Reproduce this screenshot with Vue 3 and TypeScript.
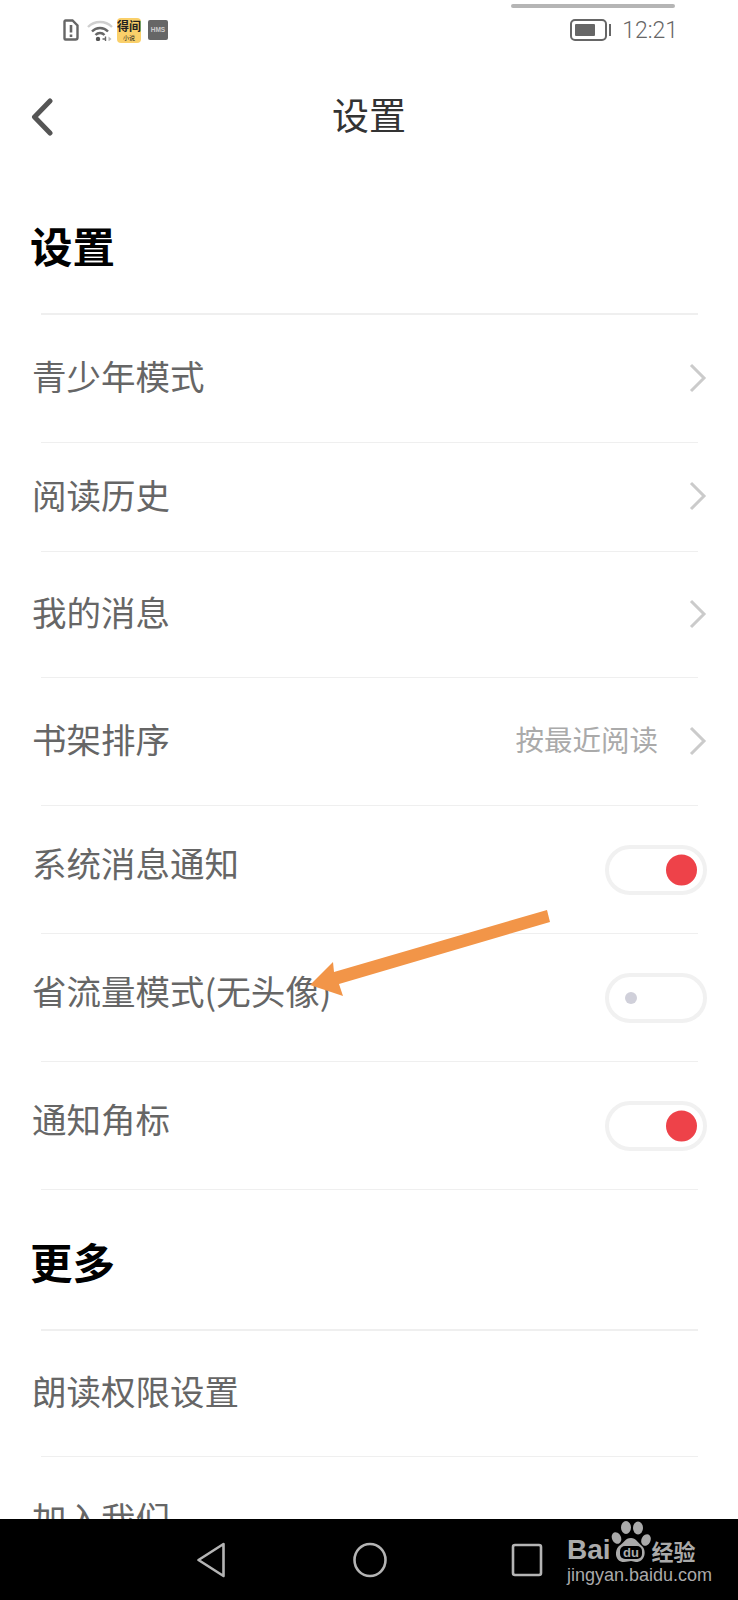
<script setup lang="ts">
interface Row {
  label: string
  kind: 'link' | 'on' | 'off' | 'plain'
  value?: string
  size?: 'short' | 'tight'
}

const firstRows: Row[] = [
  { label: '青少年模式', kind: 'link' },
  { label: '阅读历史', kind: 'link', size: 'short' },
  { label: '我的消息', kind: 'link', size: 'tight' },
  { label: '书架排序', kind: 'link', value: '按最近阅读' },
  { label: '系统消息通知', kind: 'on' },
  { label: '省流量模式(无头像)', kind: 'off' },
  { label: '通知角标', kind: 'on' }
]

const moreRows: Row[] = [
  { label: '朗读权限设置', kind: 'plain', size: 'tight' },
  { label: '加入我们', kind: 'plain' }
]

const sections = [
  { title: '设置', rows: firstRows },
  { title: '更多', rows: moreRows }
]
</script>

<template>
  <div class="page">
    <div class="top-pill"></div>

    <header class="status">
      <svg class="sim" width="16" height="22" viewBox="0 0 16 22">
        <path d="M2.5 1.5h7l5 5v12a2 2 0 0 1-2 2h-10a1 1 0 0 1-1-1v-17a1 1 0 0 1 1-1z" fill="none" stroke="#666" stroke-width="2.4" />
        <path d="M8 6v7.5M8 15.5v2.5" stroke="#666" stroke-width="2.6" fill="none" />
      </svg>
      <svg class="wifi" width="26" height="22" viewBox="0 0 26 22">
        <path d="M1 8a17 17 0 0 1 24 0" fill="none" stroke="#cfcfcf" stroke-width="2.4" />
        <path d="M5 12.5a11 11 0 0 1 16 0" fill="none" stroke="#666" stroke-width="2.4" />
        <path d="M8.5 16a6 6 0 0 1 9 0" fill="none" stroke="#666" stroke-width="2.4" />
        <circle cx="11" cy="20" r="2.2" fill="#555" />
        <path d="M15.5 20h3M18.5 17.5v5" stroke="#666" stroke-width="1.4" fill="none" />
        <path d="M21.5 17.5l3 2.5-3 2.5z" fill="#bbb" />
      </svg>
      <div class="app-icon">
        <span class="app-name">得间</span>
        <span class="app-sub">小说</span>
      </div>
      <div class="hms">HMS</div>
      <div class="status-right">
        <div class="battery"><div class="battery-fill"></div></div>
        <div class="battery-tip"></div>
        <span class="time">12:21</span>
      </div>
    </header>

    <nav class="navbar">
      <svg class="back" width="22" height="38" viewBox="0 0 22 38">
        <path d="M19 3L3.5 19 19 35" fill="none" stroke="#555" stroke-width="5" stroke-linecap="round" stroke-linejoin="round" />
      </svg>
      <span class="nav-title">设置</span>
    </nav>

    <main class="content">
      <section v-for="section in sections" :key="section.title">
        <h2 class="section-title">{{ section.title }}</h2>
        <div class="divider strong"></div>
        <template v-for="row in section.rows" :key="row.label">
          <div class="row" :class="[row.size, { lifted: row.kind === 'on' || row.kind === 'off' }]">
            <span class="label">{{ row.label }}</span>
            <span v-if="row.value" class="value">{{ row.value }}</span>
            <svg v-if="row.kind === 'link'" class="chevron" width="18" height="30" viewBox="0 0 18 30">
              <path d="M2 2l13 13L2 28" fill="none" stroke="#cbcbcb" stroke-width="3" />
            </svg>
            <div v-if="row.kind === 'on' || row.kind === 'off'" class="toggle" :class="row.kind">
              <div class="knob"></div>
            </div>
          </div>
          <div class="divider"></div>
        </template>
      </section>
    </main>

    <footer class="sysbar">
      <svg width="30" height="36" viewBox="0 0 30 36">
        <path d="M27.5 2L2.5 18l25 16z" fill="none" stroke="#b4b4b4" stroke-width="2.6" stroke-linejoin="round" />
      </svg>
      <svg width="34" height="36" viewBox="0 0 34 36">
        <ellipse cx="17" cy="18" rx="15.5" ry="16" fill="none" stroke="#b4b4b4" stroke-width="2.6" />
      </svg>
      <svg class="recents" width="32" height="34" viewBox="0 0 32 34">
        <rect x="2" y="2" width="28" height="30" rx="2" fill="none" stroke="#b4b4b4" stroke-width="2.6" />
      </svg>
    </footer>

    <div class="watermark">
      <div class="wm-top">
        <span class="wm-bai">Bai</span>
        <svg class="paw" width="40" height="42" viewBox="0 0 40 42">
          <ellipse cx="15" cy="6.5" rx="5" ry="6.5" fill="#aaa" />
          <ellipse cx="27" cy="7" rx="5" ry="6.5" fill="#aaa" />
          <ellipse cx="5.5" cy="17" rx="4.5" ry="6" fill="#aaa" transform="rotate(-25 5.5 17)" />
          <ellipse cx="35" cy="19" rx="4.5" ry="6" fill="#aaa" transform="rotate(25 35 19)" />
          <path d="M20 17c5 0 6 4 11 8 5 5 3 16-6 16-2 0-3-1-5-1s-4 1-7 1c-9 0-10-11-5-16 5-3 6-8 12-8z" fill="#aaa" />
          <rect x="9" y="25" width="22" height="13" rx="5" fill="#000" />
          <text x="20" y="36" text-anchor="middle" class="wm-du">du</text>
        </svg>
        <span class="wm-cn">经验</span>
      </div>
      <div class="wm-url">jingyan.baidu.com</div>
    </div>

    <svg class="annotation" width="260" height="100" viewBox="300 905 260 100">
      <path d="M547 910L550 922L339 984L343 996L310 985L333 962L334 972z" fill="#f29548" />
    </svg>
  </div>
</template>

<style scoped>
.page {
  position: relative;
  width: 738px;
  height: 1600px;
  overflow: hidden;
  background: #fff;
  display: flex;
  flex-direction: column;
  font-family: 'Noto Sans CJK SC', 'Noto Sans', sans-serif;
}
.top-pill {
  position: absolute;
  left: 511px;
  top: 4px;
  width: 164px;
  height: 4px;
  border-radius: 2px;
  background: #b5b5b5;
}
.status {
  height: 60px;
  flex: none;
  display: flex;
  align-items: center;
  padding: 0 60px 0 63px;
  box-sizing: border-box;
}
.wifi {
  margin-left: 8px;
}
.app-icon {
  width: 24px;
  height: 25px;
  margin-left: 4px;
  border-radius: 4px;
  background: #fad06a;
  display: flex;
  flex-direction: column;
  align-items: center;
  color: #222;
  overflow: hidden;
}
.app-name {
  font-size: 12px;
  line-height: 16px;
  font-weight: 700;
  white-space: nowrap;
}
.app-sub {
  font-size: 6px;
  line-height: 8px;
}
.hms {
  width: 20px;
  height: 20px;
  margin-left: 7px;
  border-radius: 2px;
  background: #666;
  color: #ccc;
  font: 700 6.5px/20px 'Liberation Sans', sans-serif;
  text-align: center;
}
.status-right {
  margin-left: auto;
  display: flex;
  align-items: center;
}
.battery {
  width: 37px;
  height: 22px;
  box-sizing: border-box;
  border: 2.5px solid #666;
  border-radius: 5px;
  padding: 3px;
}
.battery-fill {
  width: 20px;
  height: 100%;
  border-radius: 1px;
  background: #666;
}
.battery-tip {
  width: 2px;
  height: 12px;
  margin-left: 2px;
  background: #666;
}
.time {
  margin-left: 11px;
  font: 300 23px/1 Roboto, sans-serif;
  color: #666;
}
.navbar {
  position: relative;
  height: 114px;
  flex: none;
  display: flex;
  align-items: center;
  justify-content: center;
}
.back {
  position: absolute;
  left: 31px;
  top: 38px;
}
.nav-title {
  padding-bottom: 6px;
  font-size: 37px;
  color: #333;
}
.content {
  flex: 1;
  min-height: 0;
  overflow: hidden;
}
.section-title {
  height: 139px;
  box-sizing: border-box;
  margin: 0;
  padding: 2px 0 0 30px;
  display: flex;
  align-items: center;
  font-size: 42.5px;
  font-weight: 700;
  color: #000;
}
.divider {
  height: 1px;
  margin: 0 40px 0 41px;
  background: #efefef;
}
.divider.strong {
  height: 2px;
}
.row {
  height: 127px;
  display: flex;
  align-items: center;
  padding: 0 31px 0 32px;
}
.row.short {
  height: 108px;
}
.row.tight {
  height: 125px;
}
.label {
  padding-bottom: 7px;
  font-size: 34.5px;
  color: #666;
}
.row.lifted .label {
  padding-bottom: 15px;
}
.value {
  margin-left: auto;
  padding-bottom: 7px;
  font-size: 28.5px;
  color: #aaa;
}
.chevron {
  margin-left: auto;
  margin-bottom: 2px;
}
.value + .chevron {
  margin-left: 31px;
}
.toggle {
  position: relative;
  width: 102px;
  height: 50px;
  margin-left: auto;
  box-sizing: border-box;
  border: 4px solid #f1f1f1;
  border-radius: 25px;
}
.knob {
  position: absolute;
  top: 50%;
  border-radius: 50%;
  transform: translateY(-50%);
}
.toggle.on .knob {
  right: 6px;
  width: 31px;
  height: 31px;
  background: #ee4249;
}
.toggle.off .knob {
  left: 16px;
  width: 12px;
  height: 12px;
  background: #d0d0da;
}
.sysbar {
  height: 81px;
  flex: none;
  background: #000;
  display: flex;
  align-items: center;
  padding: 0 0 0 196px;
  box-sizing: border-box;
  gap: 127px;
}
.recents {
  margin-left: -3px;
}
.watermark {
  position: absolute;
  left: 567px;
  top: 1521px;
  width: 135px;
  color: #aaa;
}
.wm-top {
  display: flex;
  align-items: flex-end;
  height: 42px;
}
.wm-bai {
  padding-bottom: 2px;
  font: 700 28px/22px 'Liberation Sans', sans-serif;
}
.wm-du {
  font: 700 13px 'Liberation Sans', sans-serif;
  fill: #aaa;
}
.wm-cn {
  margin-left: 1px;
  padding-bottom: 1px;
  font-size: 22px;
  line-height: 24px;
  font-weight: 700;
}
.wm-url {
  font: 400 18px/24px 'Liberation Sans', sans-serif;
  white-space: nowrap;
}
.annotation {
  position: absolute;
  left: 300px;
  top: 905px;
}
</style>
